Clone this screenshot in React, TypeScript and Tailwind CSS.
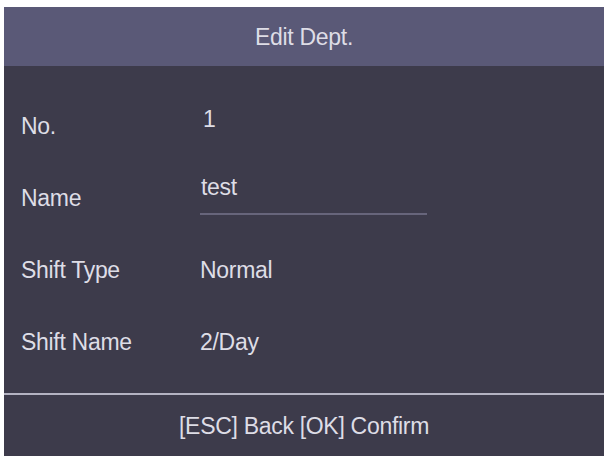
const rows = [
  { label: 'No.', value: '1', shift: 'pb-[15px]' },
  { label: 'Shift Type', value: 'Normal', shift: '' },
  { label: 'Shift Name', value: '2/Day', shift: '' },
];

const App = () => {
  return (
    <div
      className="w-[604px] h-[456px] bg-white pl-[4px] pt-[7px] overflow-hidden"
      style={{ fontFamily: '"Liberation Sans", Arial, sans-serif' }}
    >
      <div className="h-full flex flex-col text-[23px] leading-[24px] text-[#dedde6] tracking-[-0.3px]">
        <div className="h-[59px] bg-[#5a5977] flex items-center justify-center shrink-0">
          Edit Dept.
        </div>
        <div className="flex-1 bg-[#3d3b4b] pt-[24px] flex flex-col">
          <div className="h-[72px] flex items-center">
            <div className="w-[196px] pl-[17px]">{rows[0].label}</div>
            <div className={`pl-[3px] ${rows[0].shift}`}>{rows[0].value}</div>
          </div>
          <div className="h-[72px] flex items-center">
            <div className="w-[196px] pl-[17px]">Name</div>
            <div className="mb-[6px] flex flex-col">
              <div className="pl-[1px]">test</div>
              <div className="mt-[14px] w-[227px] h-[2px] bg-[#67657b]" />
            </div>
          </div>
          {rows.slice(1).map((row) => (
            <div key={row.label} className="h-[72px] flex items-center">
              <div className="w-[196px] pl-[17px]">{row.label}</div>
              <div>{row.value}</div>
            </div>
          ))}
        </div>
        <div className="h-[2px] bg-[#b4b3c2] shrink-0" />
        <div className="h-[61px] bg-[#3d3b4b] flex items-center justify-center shrink-0">
          [ESC] Back [OK] Confirm
        </div>
      </div>
    </div>
  );
};

export default App;
